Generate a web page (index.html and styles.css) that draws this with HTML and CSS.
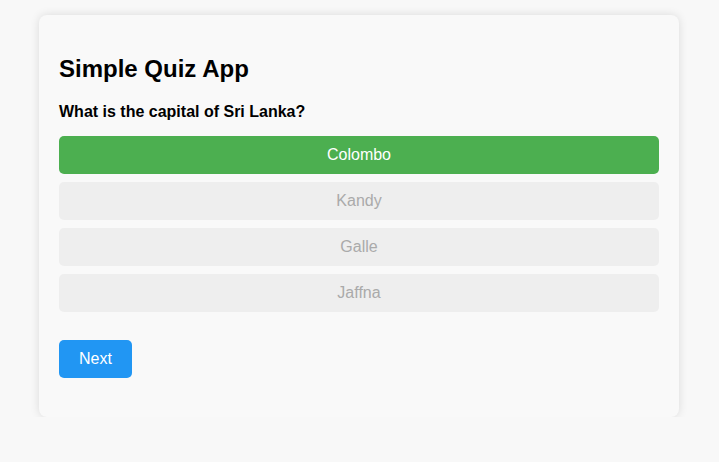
FILE: index.html
```html
<!DOCTYPE html>
<html>
<head>
<meta charset="utf-8">
<link rel="stylesheet" href="styles.css">
</head>
<body>
<div class="card">
  <h2 class="title">Simple Quiz App</h2>
  <p class="question">What is the capital of Sri Lanka?</p>
  <div class="options">
    <button class="opt correct">Colombo</button>
    <button class="opt disabled">Kandy</button>
    <button class="opt disabled">Galle</button>
    <button class="opt disabled">Jaffna</button>
  </div>
  <button class="next">Next</button>
</div>
</body>
</html>
```
FILE: styles.css
```css
html, body {
  margin: 0;
  padding: 0;
  background: #f8f8f8;
  font-family: "Liberation Sans", Arial, sans-serif;
}
body {
  padding-top: 15px;
  padding-right: 1px;
}
.card {
  width: 600px;
  margin: 0 auto;
  padding: 20px;
  background: #f9f9f9;
  border-radius: 8px;
  box-shadow: 0 0 10px rgba(0, 0, 0, 0.12);
}
.title {
  font-size: 24px;
  font-weight: bold;
  margin: 20px 0 20px;
  line-height: 28px;
  color: #000;
}
.question {
  font-size: 16px;
  font-weight: bold;
  margin: 0 0 15px;
  line-height: 18px;
  color: #000;
}
.options {
  display: flex;
  flex-direction: column;
  gap: 8px;
}
.opt {
  display: block;
  width: 100%;
  height: 38px;
  border: none;
  border-radius: 5px;
  font-family: inherit;
  font-size: 16px;
  padding: 0 10px;
}
.correct {
  background: #4caf50;
  color: #fff;
}
.disabled {
  background: #eeeeee;
  color: #aaaaaa;
}
.next {
  display: block;
  margin-top: 28px;
  margin-bottom: 19px;
  height: 38px;
  padding: 0 20px;
  border: none;
  border-radius: 5px;
  background: #2196f3;
  color: #fff;
  font-family: inherit;
  font-size: 16px;
}
```
